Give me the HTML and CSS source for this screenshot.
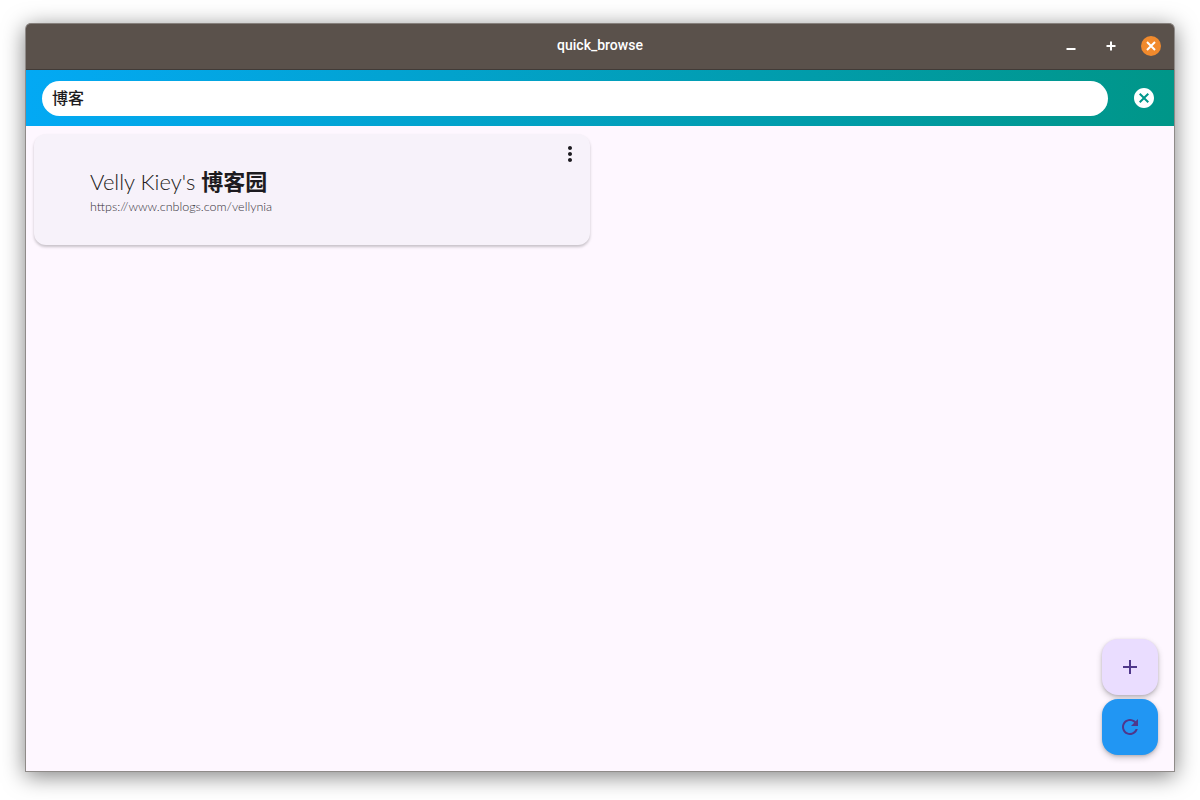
FILE: index.html
```html
<!DOCTYPE html>
<html lang="en">
  <head>
    <meta charset="UTF-8" />
    <meta name="viewport" content="width=device-width, initial-scale=1.0" />
    <title>quick_browse</title>
    <link rel="stylesheet" href="styles.css">
  </head>
  <body>
    <div class="window">
      <header class="titlebar">
        <span class="title">quick_browse</span>
        <div class="window-buttons">
          <svg class="win-icon" viewBox="0 0 20 20"><rect x="5.5" y="12" width="9" height="2" /></svg>
          <svg class="win-icon" viewBox="0 0 20 20"><path d="M9 5.500h2V9h3.500v2H11v3.500H9V11H5.500V9H9z" /></svg>
          <span class="win-close">
            <svg viewBox="0 0 20 20"><path d="M6 6l8 8M14 6l-8 8" /></svg>
          </span>
        </div>
      </header>

      <div class="searchbar">
        <div class="search-field">博客</div>
        <svg class="clear-icon" viewBox="0 0 24 24">
          <path d="M12 2C6.470 2 2 6.470 2 12s4.470 10 10 10 10-4.470 10-10S17.530 2 12 2zm5 13.590L15.590 17 12 13.410 8.410 17 7 15.590 10.590 12 7 8.410 8.410 7 12 10.590 15.590 7 17 8.410 13.410 12 17 15.590z" />
        </svg>
      </div>

      <main class="content">
        <div class="site-card">
          <div class="site-text">
            <div class="site-name">Velly Kiey's <b>博客园</b></div>
            <div class="site-url">https://www.cnblogs.com/vellynia</div>
          </div>
          <svg class="more-icon" viewBox="0 0 24 24">
            <path d="M12 8c1.100 0 2-.9 2-2s-.9-2-2-2-2 .9-2 2 .9 2 2 2zm0 2c-1.100 0-2 .9-2 2s.9 2 2 2 2-.9 2-2-.9-2-2-2zm0 6c-1.100 0-2 .9-2 2s.9 2 2 2 2-.9 2-2-.9-2-2-2z" />
          </svg>
        </div>

        <div class="fab-stack">
          <button class="fab fab-add">
            <svg viewBox="0 0 24 24"><path d="M19 13h-6v6h-2v-6H5v-2h6V5h2v6h6v2z" /></svg>
          </button>
          <button class="fab fab-refresh">
            <svg viewBox="0 0 24 24"><path d="M17.650 6.350C16.200 4.900 14.210 4 12 4c-4.420 0-7.990 3.580-7.990 8s3.570 8 7.990 8c3.730 0 6.840-2.550 7.730-6h-2.080c-.82 2.330-3.040 4-5.650 4-3.310 0-6-2.690-6-6s2.690-6 6-6c1.660 0 3.140.69 4.220 1.780L13 11h7V4l-2.350 2.350z" /></svg>
          </button>
        </div>
      </main>
    </div>
  </body>
</html>
```

FILE: styles.css
```css
html,
body {
  margin: 0;
  padding: 0;
  height: 100%;
}
body {
  box-sizing: border-box;
  padding: 23px 25px 28px;
  background-color: #ffffff;
  font-family: "Noto Sans CJK SC", "Noto Sans", sans-serif;
  overflow: hidden;
}

/* Window frame */
.window {
  box-sizing: border-box;
  height: 749px;
  display: flex;
  flex-direction: column;
  border: 1px solid #8f8b89;
  border-top: none;
  border-radius: 6px 6px 0 0;
  background-color: #fef7ff;
  box-shadow: 0 4px 22px rgba(0, 0, 0, 0.5);
}

/* Title bar */
.titlebar {
  position: relative;
  flex: none;
  height: 47px;
  box-sizing: border-box;
  display: flex;
  align-items: center;
  justify-content: center;
  padding-bottom: 3px;
  background-color: #5a514b;
  border-top: 1px solid #86807c;
  border-bottom: 1px solid #423b37;
  border-radius: 5px 5px 0 0;
}
.title {
  font-family: Roboto, sans-serif;
  font-size: 14px;
  font-weight: 500;
  color: #ffffff;
}
.window-buttons {
  position: absolute;
  right: 13px;
  top: 12px;
  display: flex;
  align-items: center;
  gap: 20px;
}
.win-icon {
  width: 20px;
  height: 20px;
  fill: #ffffff;
}
.win-close {
  width: 20px;
  height: 20px;
  border-radius: 50%;
  background-color: #f18a2d;
}
.win-close svg {
  display: block;
  width: 20px;
  height: 20px;
  fill: none;
  stroke: #ffffff;
  stroke-width: 2;
}

/* Search row */
.searchbar {
  flex: none;
  height: 56px;
  box-sizing: border-box;
  display: flex;
  align-items: center;
  padding: 0 18px 0 16px;
  gap: 24px;
  background: linear-gradient(92.8deg, #03a9f4, #009688);
}
.search-field {
  flex: 1;
  height: 35px;
  box-sizing: border-box;
  padding-left: 10px;
  line-height: 33px;
  font-size: 16px;
  font-weight: 500;
  color: #1d1b20;
  background-color: #ffffff;
  border-radius: 18px;
}
.clear-icon {
  flex: none;
  width: 24px;
  height: 24px;
  fill: #ffffff;
}

/* List area */
.content {
  position: relative;
  flex: 1;
  padding: 8px;
  background-color: #fef7ff;
}
.site-card {
  position: relative;
  box-sizing: border-box;
  width: 556px;
  height: 111px;
  padding: 32px 56px 0;
  background-color: #f7f2fa;
  border-radius: 12px;
  box-shadow: 0 2px 3px rgba(0, 0, 0, 0.22);
}
.site-name {
  font-family: "Lato", "Noto Sans CJK SC", sans-serif;
  font-size: 22px;
  font-weight: 300;
  line-height: 28px;
  color: #1d1b20;
}
.site-name b {
  font-family: "Noto Sans CJK SC", sans-serif;
  font-weight: 700;
}
.site-url {
  margin-top: 3px;
  font-family: "Lato", sans-serif;
  font-size: 12.5px;
  font-weight: 300;
  line-height: 16px;
  color: #332f38;
}
.more-icon {
  position: absolute;
  top: 8px;
  right: 8px;
  width: 24px;
  height: 24px;
  fill: #1d1b20;
}

/* Floating buttons */
.fab-stack {
  position: absolute;
  right: 16px;
  bottom: 16px;
  display: flex;
  flex-direction: column;
  gap: 4px;
}
.fab {
  width: 56px;
  height: 56px;
  padding: 0;
  display: flex;
  align-items: center;
  justify-content: center;
  border: none;
  border-radius: 16px;
  box-shadow: 0 3px 6px rgba(0, 0, 0, 0.2), 0 1px 3px rgba(0, 0, 0, 0.15);
}
.fab svg {
  width: 24px;
  height: 24px;
  fill: #4f378b;
}
.fab-add {
  background-color: #eaddff;
}
.fab-refresh {
  background-color: #2196f3;
}
```
